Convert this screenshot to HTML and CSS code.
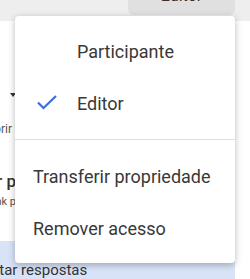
FILE: index.html
```html
<!DOCTYPE html>
<html lang="pt">
<head>
    <meta charset="UTF-8">
    <meta name="viewport" content="width=device-width, initial-scale=1.0">
    <title>Acesso</title>
    <link rel="stylesheet" href="styles.css">
</head>
<body>
    <div class="page">
        <div class="topbar">
            <div class="role-btn">Editor</div>
        </div>
        <div class="content">
            <div class="row-arrow"><span class="caret"></span></div>
            <div class="clip row-hint"><span>Descobrir</span></div>
            <div class="clip row-title"><span>Editar p</span></div>
            <div class="clip row-sub"><span>Qualquer link p</span></div>
            <div class="row-band"><span>Aceitar respostas</span></div>
        </div>
    </div>

    <div class="menu">
        <div class="item indent">Participante</div>
        <div class="item indent">
            <svg class="check" width="22" height="16" viewBox="0 0 22 16">
                <path d="M2 8.5 L7.5 14 L20 2" fill="none" stroke="#3b6fd9" stroke-width="2.2"/>
            </svg>
            Editor
        </div>
        <div class="divider"></div>
        <div class="item">Transferir propriedade</div>
        <div class="item">Remover acesso</div>
    </div>
</body>
</html>
```
FILE: styles.css
```css
body {
    margin: 0;
    width: 250px;
    height: 279px;
    overflow: hidden;
    font-family: Roboto, "Noto Sans", sans-serif;
    color: #333;
    background-color: #fff;
    position: relative;
}
.page {
    display: flex;
    flex-direction: column;
    height: 279px;
}
.topbar {
    height: 24px;
    background-color: #eeeeee;
    display: flex;
    justify-content: flex-end;
    padding-right: 15px;
}
.role-btn {
    width: 107px;
    height: 21px;
    margin-top: -6px;
    background-color: #e0e0e0;
    border-radius: 0 0 6px 6px;
    font-size: 16px;
    line-height: 4px;
    text-align: center;
    overflow: hidden;
    color: #333;
}
.content {
    flex: 1;
    display: flex;
    flex-direction: column;
}
.row-arrow {
    height: 16px;
    margin-top: 72px;
    padding-left: 10px;
}
.caret {
    display: block;
    width: 0;
    height: 0;
    border-left: 3px solid transparent;
    border-right: 3px solid transparent;
    border-top: 4px solid #333;
}
.clip {
    display: flex;
    justify-content: flex-end;
    white-space: nowrap;
}
.row-hint {
    width: 12px;
    font-size: 12px;
    margin-top: 13px;
    color: #555;
}
.row-title {
    width: 16px;
    font-size: 17px;
    font-weight: 500;
    margin-top: 35px;
}
.row-sub {
    width: 16px;
    font-size: 11px;
    margin-top: 4px;
    color: #555;
}
.row-band {
    margin-top: 33px;
    margin-right: 15px;
    flex: 1;
    background-color: #d9e3f7;
    font-size: 15px;
    padding-top: 20px;
    overflow: hidden;
}
.row-band span {
    display: block;
    margin-left: -30px;
    white-space: nowrap;
}
.menu {
    position: absolute;
    left: 15px;
    top: 16px;
    width: 220px;
    padding: 9px 0;
    background-color: #fff;
    border-radius: 4px;
    box-shadow: 0 2px 7px rgba(0, 0, 0, 0.28);
}
.item {
    position: relative;
    height: 52px;
    display: flex;
    align-items: center;
    padding-left: 18px;
    font-size: 18px;
    color: #383838;
}
.item.indent {
    padding-left: 62px;
}
.check {
    position: absolute;
    left: 21px;
    top: 17px;
}
.divider {
    height: 1px;
    background-color: #dddddd;
    margin: 10px 0;
}
```
